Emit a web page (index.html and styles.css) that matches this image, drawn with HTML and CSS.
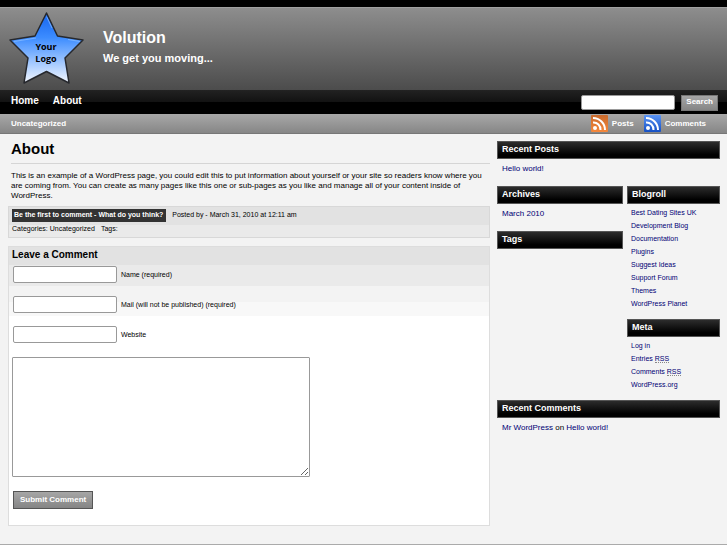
FILE: index.html
```
<!DOCTYPE html>
<html lang="en">
  <head>
    <meta charset="UTF-8" />
    <meta name="viewport" content="width=device-width, initial-scale=1.0" />
    <title>Volution - About</title>
    <link rel="stylesheet" href="styles.css">
  </head>
  <body>
    <header class="header">
      <svg class="logo" viewBox="0 0 78 76" role="img" aria-label="Your Logo">
        <defs>
          <linearGradient id="star-fill" x1="0" y1="0" x2="0" y2="1">
            <stop offset="0" stop-color="#1464f0" />
            <stop offset="0.35" stop-color="#3c8cff" />
            <stop offset="1" stop-color="#f4f8ff" />
          </linearGradient>
        </defs>
        <path d="M38.5 2 L49.5 25 L75 29 L57 47 L61 72 L38.5 60.5 L16 72 L20 47 L2 29 L27 25 Z" fill="url(#star-fill)" stroke="#26282d" stroke-width="1.5" stroke-linejoin="round" />
        <path d="M28 27 L6 30.500 M38.500 5.500 L44 17 M72 30.500 L60 28.500" fill="none" stroke="#8fc0ff" stroke-width="1" opacity="0.7" />
        <text class="logo-text" x="38" y="39">Your</text>
        <text class="logo-text" x="38" y="51">Logo</text>
      </svg>
      <div class="branding">
        <div class="site-title">Volution</div>
        <div class="tagline">We get you moving...</div>
      </div>
    </header>

    <nav class="nav">
      <a href="#">Home</a>
      <a href="#">About</a>
      <form class="search">
        <input type="text" class="search-input" aria-label="Search" />
        <button type="button" class="button">Search</button>
      </form>
    </nav>

    <nav class="subnav">
      <a href="#">Uncategorized</a>
      <div class="feeds">
        <a href="#" class="feed">
          <svg class="feed-icon" viewBox="0 0 17 17">
            <defs>
              <linearGradient id="rss-orange" x1="0" y1="0" x2="0" y2="1">
                <stop offset="0" stop-color="#c96a2c" />
                <stop offset="1" stop-color="#f5883c" />
              </linearGradient>
            </defs>
            <rect width="17" height="17" rx="1" fill="url(#rss-orange)" />
            <circle cx="4" cy="13" r="2" fill="#fff" />
            <path d="M2 7.500 A7 7 0 0 1 9.500 15 M2 3 A12 12 0 0 1 14 15" fill="none" stroke="#fff" stroke-width="2" />
          </svg>
          Posts
        </a>
        <a href="#" class="feed">
          <svg class="feed-icon" viewBox="0 0 17 17">
            <defs>
              <linearGradient id="rss-blue" x1="0" y1="0" x2="0" y2="1">
                <stop offset="0" stop-color="#5b95f5" />
                <stop offset="1" stop-color="#1550c4" />
              </linearGradient>
            </defs>
            <rect width="17" height="17" rx="1" fill="url(#rss-blue)" />
            <circle cx="4" cy="13" r="2" fill="#fff" />
            <path d="M2 7.500 A7 7 0 0 1 9.500 15 M2 3 A12 12 0 0 1 14 15" fill="none" stroke="#fff" stroke-width="2" />
          </svg>
          Comments
        </a>
      </div>
    </nav>

    <div class="page">
      <main class="content">
        <h1>About</h1>
        <p class="entry">This is an example of a WordPress page, you could edit this to put information about yourself or your site so readers know where you are coming from. You can create as many pages like this one or sub-pages as you like and manage all of your content inside of WordPress.</p>

        <div class="post-meta">
          <div>
            <a href="#" class="comment-link">Be the first to comment - What do you think?</a>
            <span>Posted by - March 31, 2010 at 12:11 am</span>
          </div>
          <div class="categories">
            <span>Categories: Uncategorized</span>
            <span>Tags:</span>
          </div>
        </div>

        <form class="comment-form">
          <h2>Leave a Comment</h2>
          <div class="field">
            <input type="text" id="author" />
            <label for="author">Name (required)</label>
          </div>
          <div class="field">
            <input type="text" id="email" />
            <label for="email">Mail (will not be published) (required)</label>
          </div>
          <div class="field">
            <input type="text" id="url" />
            <label for="url">Website</label>
          </div>
          <textarea aria-label="Comment"></textarea>
          <button type="button" class="button submit">Submit Comment</button>
        </form>
      </main>

      <aside class="sidebar">
        <section class="widget">
          <h3>Recent Posts</h3>
          <ul>
            <li><a href="#">Hello world!</a></li>
          </ul>
        </section>

        <div class="columns">
          <div>
            <section class="widget">
              <h3>Archives</h3>
              <ul>
                <li><a href="#">March 2010</a></li>
              </ul>
            </section>
            <section class="widget">
              <h3>Tags</h3>
            </section>
          </div>
          <div>
            <section class="widget small">
              <h3>Blogroll</h3>
              <ul>
                <li><a href="#">Best Dating Sites UK</a></li>
                <li><a href="#">Development Blog</a></li>
                <li><a href="#">Documentation</a></li>
                <li><a href="#">Plugins</a></li>
                <li><a href="#">Suggest Ideas</a></li>
                <li><a href="#">Support Forum</a></li>
                <li><a href="#">Themes</a></li>
                <li><a href="#">WordPress Planet</a></li>
              </ul>
            </section>
            <section class="widget small">
              <h3>Meta</h3>
              <ul>
                <li><a href="#">Log in</a></li>
                <li><a href="#">Entries <abbr>RSS</abbr></a></li>
                <li><a href="#">Comments <abbr>RSS</abbr></a></li>
                <li><a href="#">WordPress.org</a></li>
              </ul>
            </section>
          </div>
        </div>

        <section class="widget">
          <h3>Recent Comments</h3>
          <ul>
            <li><a href="#">Mr WordPress</a> on <a href="#">Hello world!</a></li>
          </ul>
        </section>
      </aside>
    </div>

    <footer class="footer"></footer>
  </body>
</html>
```

FILE: styles.css
```
* {
  box-sizing: border-box;
}

body {
  margin: 0;
  background: #f3f3f3;
  color: #000;
  font-family: "Liberation Sans", Arial, sans-serif;
  font-size: 8px;
  line-height: 10px;
}

a {
  color: #000073;
  text-decoration: none;
}

h1,
h2,
h3,
p,
ul {
  margin: 0;
  padding: 0;
}

ul {
  list-style: none;
}

/* Header */
.header {
  display: flex;
  gap: 17px;
  height: 90px;
  padding-left: 8px;
  border-top: 7px solid #000;
  background: linear-gradient(#8e8e8e, #4c4c4c);
  box-shadow: inset 0 1px 0 #a0a0a0;
  color: #fff;
}

.logo {
  width: 78px;
  height: 76px;
  margin-top: 4px;
}

.logo-text {
  font-family: "Open Sans", sans-serif;
  font-size: 9px;
  font-weight: bold;
  text-anchor: middle;
}

.branding {
  padding-top: 21px;
  font-weight: bold;
}

.site-title {
  font-size: 16px;
  line-height: 20px;
}

.tagline {
  font-size: 11px;
  line-height: 20px;
}

/* Navigation bars */
.nav {
  display: flex;
  align-items: center;
  gap: 14px;
  height: 24px;
  padding: 0 9px 0 11px;
  background: linear-gradient(#222, #121212 50%, #000 50%);
}

.nav a {
  padding-bottom: 2px;
  color: #fff;
  font-size: 10px;
  font-weight: bold;
}

.search {
  display: flex;
  gap: 6px;
  margin-left: auto;
  padding-top: 1px;
}

.search-input {
  width: 94px;
  height: 15px;
  border: 1px solid #999;
  border-radius: 2px;
  background: #fff;
}

.button {
  height: 16px;
  padding: 0 4px 1px;
  border: 1px solid #777;
  background: linear-gradient(#a6a6a6, #858585);
  color: #fff;
  font-family: inherit;
  font-size: 8px;
  font-weight: bold;
  line-height: 10px;
}

.subnav {
  display: flex;
  align-items: center;
  justify-content: space-between;
  height: 20px;
  padding: 0 21px 0 11px;
  border-bottom: 1px solid #777;
  background: linear-gradient(#a8a8a8, #868686);
}

.subnav a {
  color: #fff;
  font-weight: bold;
}

.feeds {
  display: flex;
  gap: 10px;
}

.feed {
  display: flex;
  align-items: center;
  gap: 4px;
}

.feed-icon {
  width: 17px;
  height: 17px;
}

/* Page layout */
.page {
  display: grid;
  grid-template-columns: 482fr 223fr;
  gap: 7px;
  padding: 7px 7px 0 8px;
}

h1 {
  margin: 0 0 7px 3px;
  padding-bottom: 6px;
  border-bottom: 1px solid #d5d5d5;
  font-size: 15px;
  line-height: 16px;
}

.entry {
  padding-left: 3px;
}

.post-meta {
  display: flex;
  flex-direction: column;
  gap: 2px;
  margin-top: 5px;
  padding: 2px 3px 3px;
  border: 1px solid #d8d8d8;
  background: linear-gradient(#e2e2e2 60%, #eaeaea 60%);
  font-size: 7px;
}

.comment-link {
  display: inline-block;
  margin-right: 4px;
  padding: 1px 3px 2px 2px;
  background: #333;
  color: #fff;
  font-weight: bold;
}

.categories {
  display: flex;
  gap: 6px;
}

/* Comment form */
.comment-form {
  margin-top: 8px;
  padding: 0 3px 16px;
  border: 1px solid #ddd;
  background: linear-gradient(#e2e2e2 18px, #eaeaea 18px 39px, #f3f3f3 39px 55px, #f8f8f8 55px 69px, #fff 69px);
}

h2 {
  padding: 2px 0 5px;
  font-size: 10px;
  line-height: 12px;
}

.field {
  display: flex;
  align-items: center;
  gap: 4px;
  margin: 0 0 13px 1px;
  font-size: 7px;
}

.field input {
  width: 104px;
  height: 17px;
  border: 1px solid #999;
  border-radius: 2px;
  background: #fff;
}

.comment-form textarea {
  display: block;
  width: 298px;
  max-width: 100%;
  height: 120px;
  margin-top: 14px;
  border: 1px solid #999;
  border-radius: 1px;
  background: #fff;
}

.submit {
  display: block;
  height: 18px;
  margin: 14px 0 0 1px;
  padding: 0 6px 1px;
  border-color: #555;
}

/* Sidebar */
.widget h3 {
  padding: 2px 4px 4px;
  border: 1px solid #555;
  background: linear-gradient(#2c2c2c, #000 80%);
  color: #fff;
  font-size: 9px;
  line-height: 10px;
}

.widget ul {
  padding: 5px 5px 12px;
}

.columns {
  display: grid;
  grid-template-columns: 126fr 93fr;
  gap: 4px;
}

.small ul {
  padding: 2px 4px 9px;
  font-size: 7px;
  line-height: 13px;
}

abbr {
  border-bottom: 1px dotted #888;
}

.footer {
  height: 19px;
  border-bottom: 1px solid #aaa;
}
```
